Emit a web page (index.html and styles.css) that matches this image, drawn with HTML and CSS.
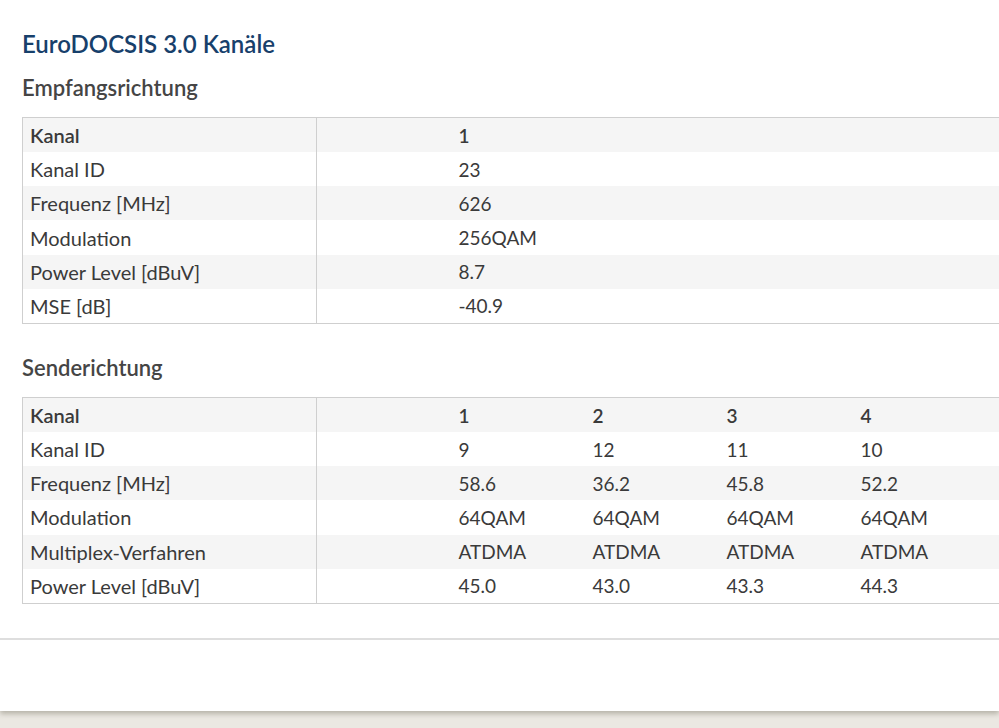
FILE: index.html
```html
<!DOCTYPE html>
<html lang="de">
<head>
<meta charset="utf-8">
<title>EuroDOCSIS 3.0 Kanäle</title>
<link rel="stylesheet" href="styles.css">
</head>
<body>
<div class="card">
  <div class="content">
    <h1 class="title">EuroDOCSIS 3.0 Kanäle</h1>
    <h2 class="subtitle">Empfangsrichtung</h2>
    <div class="table-wrap">
      <table class="channels">
        <colgroup>
          <col class="c-label"><col class="c-gap"><col class="c-val"><col class="c-val"><col class="c-val"><col class="c-last">
        </colgroup>
        <tr class="head"><td class="label">Kanal</td><td></td><td>1</td><td></td><td></td><td></td></tr>
        <tr><td class="label">Kanal ID</td><td></td><td>23</td><td></td><td></td><td></td></tr>
        <tr><td class="label">Frequenz [MHz]</td><td></td><td>626</td><td></td><td></td><td></td></tr>
        <tr><td class="label">Modulation</td><td></td><td>256QAM</td><td></td><td></td><td></td></tr>
        <tr><td class="label">Power Level [dBuV]</td><td></td><td>8.7</td><td></td><td></td><td></td></tr>
        <tr><td class="label">MSE [dB]</td><td></td><td>-40.9</td><td></td><td></td><td></td></tr>
      </table>
    </div>
    <h2 class="subtitle second">Senderichtung</h2>
    <div class="table-wrap">
      <table class="channels">
        <colgroup>
          <col class="c-label"><col class="c-gap"><col class="c-val"><col class="c-val"><col class="c-val"><col class="c-last">
        </colgroup>
        <tr class="head"><td class="label">Kanal</td><td></td><td>1</td><td>2</td><td>3</td><td>4</td></tr>
        <tr><td class="label">Kanal ID</td><td></td><td>9</td><td>12</td><td>11</td><td>10</td></tr>
        <tr><td class="label">Frequenz [MHz]</td><td></td><td>58.6</td><td>36.2</td><td>45.8</td><td>52.2</td></tr>
        <tr><td class="label">Modulation</td><td></td><td>64QAM</td><td>64QAM</td><td>64QAM</td><td>64QAM</td></tr>
        <tr><td class="label">Multiplex-Verfahren</td><td></td><td>ATDMA</td><td>ATDMA</td><td>ATDMA</td><td>ATDMA</td></tr>
        <tr><td class="label">Power Level [dBuV]</td><td></td><td>45.0</td><td>43.0</td><td>43.3</td><td>44.3</td></tr>
      </table>
    </div>
  </div>
  <div class="divider"></div>
</div>
</body>
</html>
```
FILE: styles.css
```css
html, body {
  margin: 0;
  padding: 0;
}
body {
  background: #ebe8e2;
  font-family: "Lato", "Open Sans", sans-serif;
  color: #3a3a3a;
  overflow: hidden;
  width: 999px;
  height: 728px;
}
.card {
  background: #ffffff;
  height: 711px;
  box-shadow: 0 3px 5px rgba(120, 115, 100, 0.45);
  overflow: hidden;
}
.content {
  padding: 28px 0 0 22px;
}
.title {
  margin: 0;
  font-size: 24px;
  line-height: 32px;
  font-weight: 600;
  color: #17406b;
}
.subtitle {
  margin: 14px 0 0;
  font-size: 22px;
  line-height: 28px;
  font-weight: 600;
  color: #454545;
}
.subtitle.second {
  margin-top: 30px;
}
.table-wrap {
  margin-top: 15px;
  width: 1100px;
}
.channels {
  border-collapse: collapse;
  table-layout: fixed;
  width: 994px;
  border: 1px solid #cfcfcf;
  font-size: 19px;
  color: #3a3a3a;
}
.channels td {
  height: 34.17px;
  padding: 0 8px;
  white-space: nowrap;
  vertical-align: middle;
}
.channels td.label {
  padding-left: 7px;
  font-size: 20px;
  border-right: 1px solid #cfcfcf;
}
.channels tr:nth-child(odd) {
  background: #f5f5f5;
}
.channels tr.head td {
  font-weight: 600;
}
.c-label { width: 294px; }
.c-gap { width: 134px; }
.c-val { width: 134px; }
.c-last { width: 164px; }
.divider {
  margin-top: 34px;
  height: 2px;
  background: #dedede;
}
```
